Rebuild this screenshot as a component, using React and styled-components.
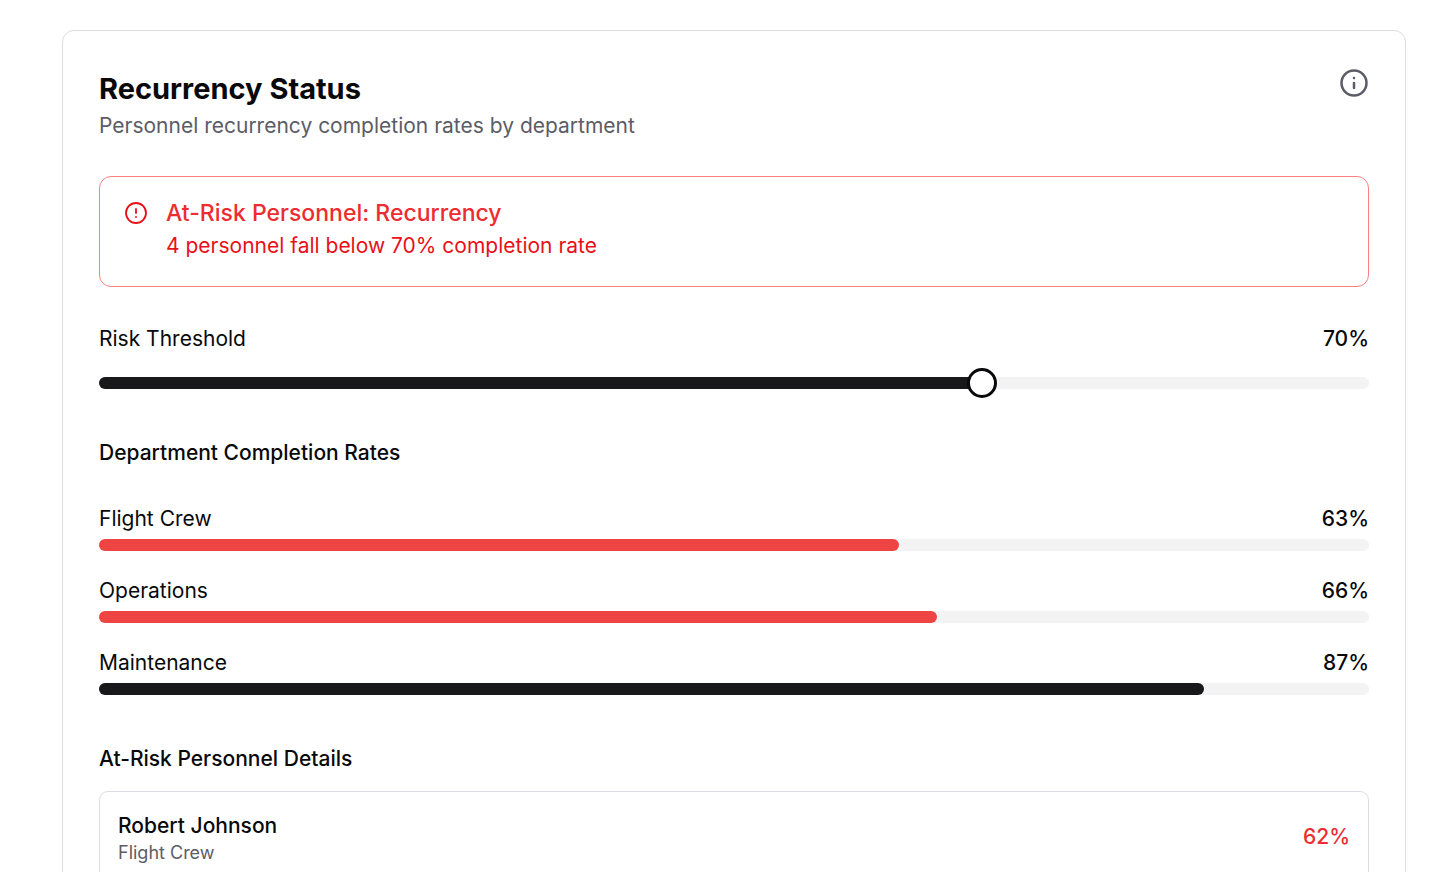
import React, { useState } from "react";
import styled, { createGlobalStyle } from "styled-components";
import { CircleAlert, Info } from "lucide-react";

const departments = [
  { id: "flight-crew", name: "Flight Crew", rate: 63 },
  { id: "operations", name: "Operations", rate: 66 },
  { id: "maintenance", name: "Maintenance", rate: 87 },
];

const personnel = [{ name: "Robert Johnson", department: "Flight Crew", rate: 62 }];

function App() {
  const [threshold, setThreshold] = useState(70);

  return (
    <Page>
      <GlobalStyle />
      <Card>
        {/* card header */}
        <Header>
          <div>
            <Title>Recurrency Status</Title>
            <Description>
              Personnel recurrency completion rates by department
            </Description>
          </div>
          <InfoButton type="button" aria-label="About recurrency status">
            <Info size={30} />
          </InfoButton>
        </Header>

        {/* at-risk alert */}
        <Alert role="alert">
          <CircleAlert size={24} strokeWidth={1.8} />
          <div>
            <AlertTitle>At-Risk Personnel: Recurrency</AlertTitle>
            <AlertText>
              4 personnel fall below {threshold}% completion rate
            </AlertText>
          </div>
        </Alert>

        {/* threshold slider */}
        <Threshold>
          <Row>
            <label htmlFor="threshold">Risk Threshold</label>
            <Percent>{threshold}%</Percent>
          </Row>
          <Slider
            id="threshold"
            type="range"
            min="0"
            max="100"
            value={threshold}
            onChange={e => setThreshold(Number(e.target.value))}
            style={{ "--value": threshold / 100 }}
          />
        </Threshold>

        {/* department rates */}
        <Heading>Department Completion Rates</Heading>
        <Departments>
          {departments.map(d => (
            <Department key={d.id}>
              <Row>
                <label htmlFor={d.id}>{d.name}</label>
                <Percent>{d.rate}%</Percent>
              </Row>
              <Bar
                id={d.id}
                max="100"
                value={d.rate}
                $atRisk={d.rate < threshold}
              />
            </Department>
          ))}
        </Departments>

        {/* personnel details */}
        <Heading>At-Risk Personnel Details</Heading>
        <People>
          {personnel.map(p => (
            <Person key={p.name}>
              <div>
                <Name>{p.name}</Name>
                <Role>{p.department}</Role>
              </div>
              <Percent $atRisk>{p.rate}%</Percent>
            </Person>
          ))}
        </People>
      </Card>
    </Page>
  );
}

export default App;

const GlobalStyle = createGlobalStyle`
  * {
    box-sizing: border-box;
  }

  body {
    margin: 0;
    background: #fff;
    color: #09090b;
    font-family: Inter, "Liberation Sans", sans-serif;
    font-size: 21px;
    line-height: 32px;
  }

  h2, h3, h4, p, ul {
    margin: 0;
    padding: 0;
  }
`;

const Page = styled.main`
  height: 100vh;
  overflow: hidden;
  padding: 30px 50px 0 62px;
`;

const Card = styled.section`
  padding: 37px 36px 36px;
  border: 1px solid #dcdce4;
  border-radius: 12px;
`;

const Header = styled.header`
  display: flex;
  justify-content: space-between;
  align-items: flex-start;
  margin-bottom: 34px;
`;

const Title = styled.h2`
  font-size: 29px;
  font-weight: 700;
  line-height: 42px;
`;

const Description = styled.p`
  color: #5c5c66;
`;

const InfoButton = styled.button`
  display: flex;
  padding: 0;
  border: 0;
  background: none;
  color: #5c5c66;
`;

const Alert = styled.div`
  display: flex;
  gap: 18px;
  margin-bottom: 36px;
  padding: 24px;
  border: 1px solid #f98080;
  border-radius: 12px;
  color: #e81018;
`;

const AlertTitle = styled.h3`
  margin-bottom: 5px;
  color: #ec2c30;
  font-size: 23px;
  font-weight: 500;
  line-height: 24px;
`;

const AlertText = styled.p`
  line-height: 32px;
`;

const Threshold = styled.div`
  display: grid;
  gap: 13px;
  margin-bottom: 39px;
`;

const Row = styled.div`
  display: flex;
  justify-content: space-between;
`;

const Percent = styled.span`
  color: ${({ $atRisk }) => ($atRisk ? "#ec2c30" : "inherit")};
  font-weight: 500;
`;

const Slider = styled.input`
  appearance: none;
  display: block;
  width: 100%;
  height: 30px;
  margin: 0;
  background: none;

  &::-webkit-slider-runnable-track {
    height: 12px;
    border-radius: 6px;
    background: linear-gradient(
      to right,
      #18181b calc(15px + (100% - 30px) * var(--value)),
      #f3f3f3 0
    );
  }

  &::-webkit-slider-thumb {
    appearance: none;
    width: 30px;
    height: 30px;
    margin-top: -9px;
    border: 3px solid #09090b;
    border-radius: 50%;
    background: #fff;
  }
`;

const Heading = styled.h4`
  font-size: 21px;
  font-weight: 500;
`;

const Departments = styled.div`
  display: grid;
  gap: 24px;
  margin: 34px 0 48px;
`;

const Department = styled.div`
  display: grid;
  gap: 4px;
`;

const Bar = styled.progress`
  appearance: none;
  display: block;
  width: 100%;
  height: 12px;
  border: 0;

  &::-webkit-progress-bar {
    border-radius: 6px;
    background: #f3f3f3;
  }

  &::-webkit-progress-value {
    border-radius: 6px;
    background: ${({ $atRisk }) => ($atRisk ? "#ef4444" : "#18181b")};
  }
`;

const People = styled.ul`
  display: grid;
  gap: 12px;
  margin-top: 16px;
  list-style: none;
`;

const Person = styled.li`
  display: flex;
  justify-content: space-between;
  align-items: center;
  padding: 18px;
  border: 1px solid #dcdce4;
  border-radius: 9px;
`;

const Name = styled.p`
  font-weight: 500;
`;

const Role = styled.p`
  color: #5c5c66;
  font-size: 18px;
  line-height: 22px;
`;
